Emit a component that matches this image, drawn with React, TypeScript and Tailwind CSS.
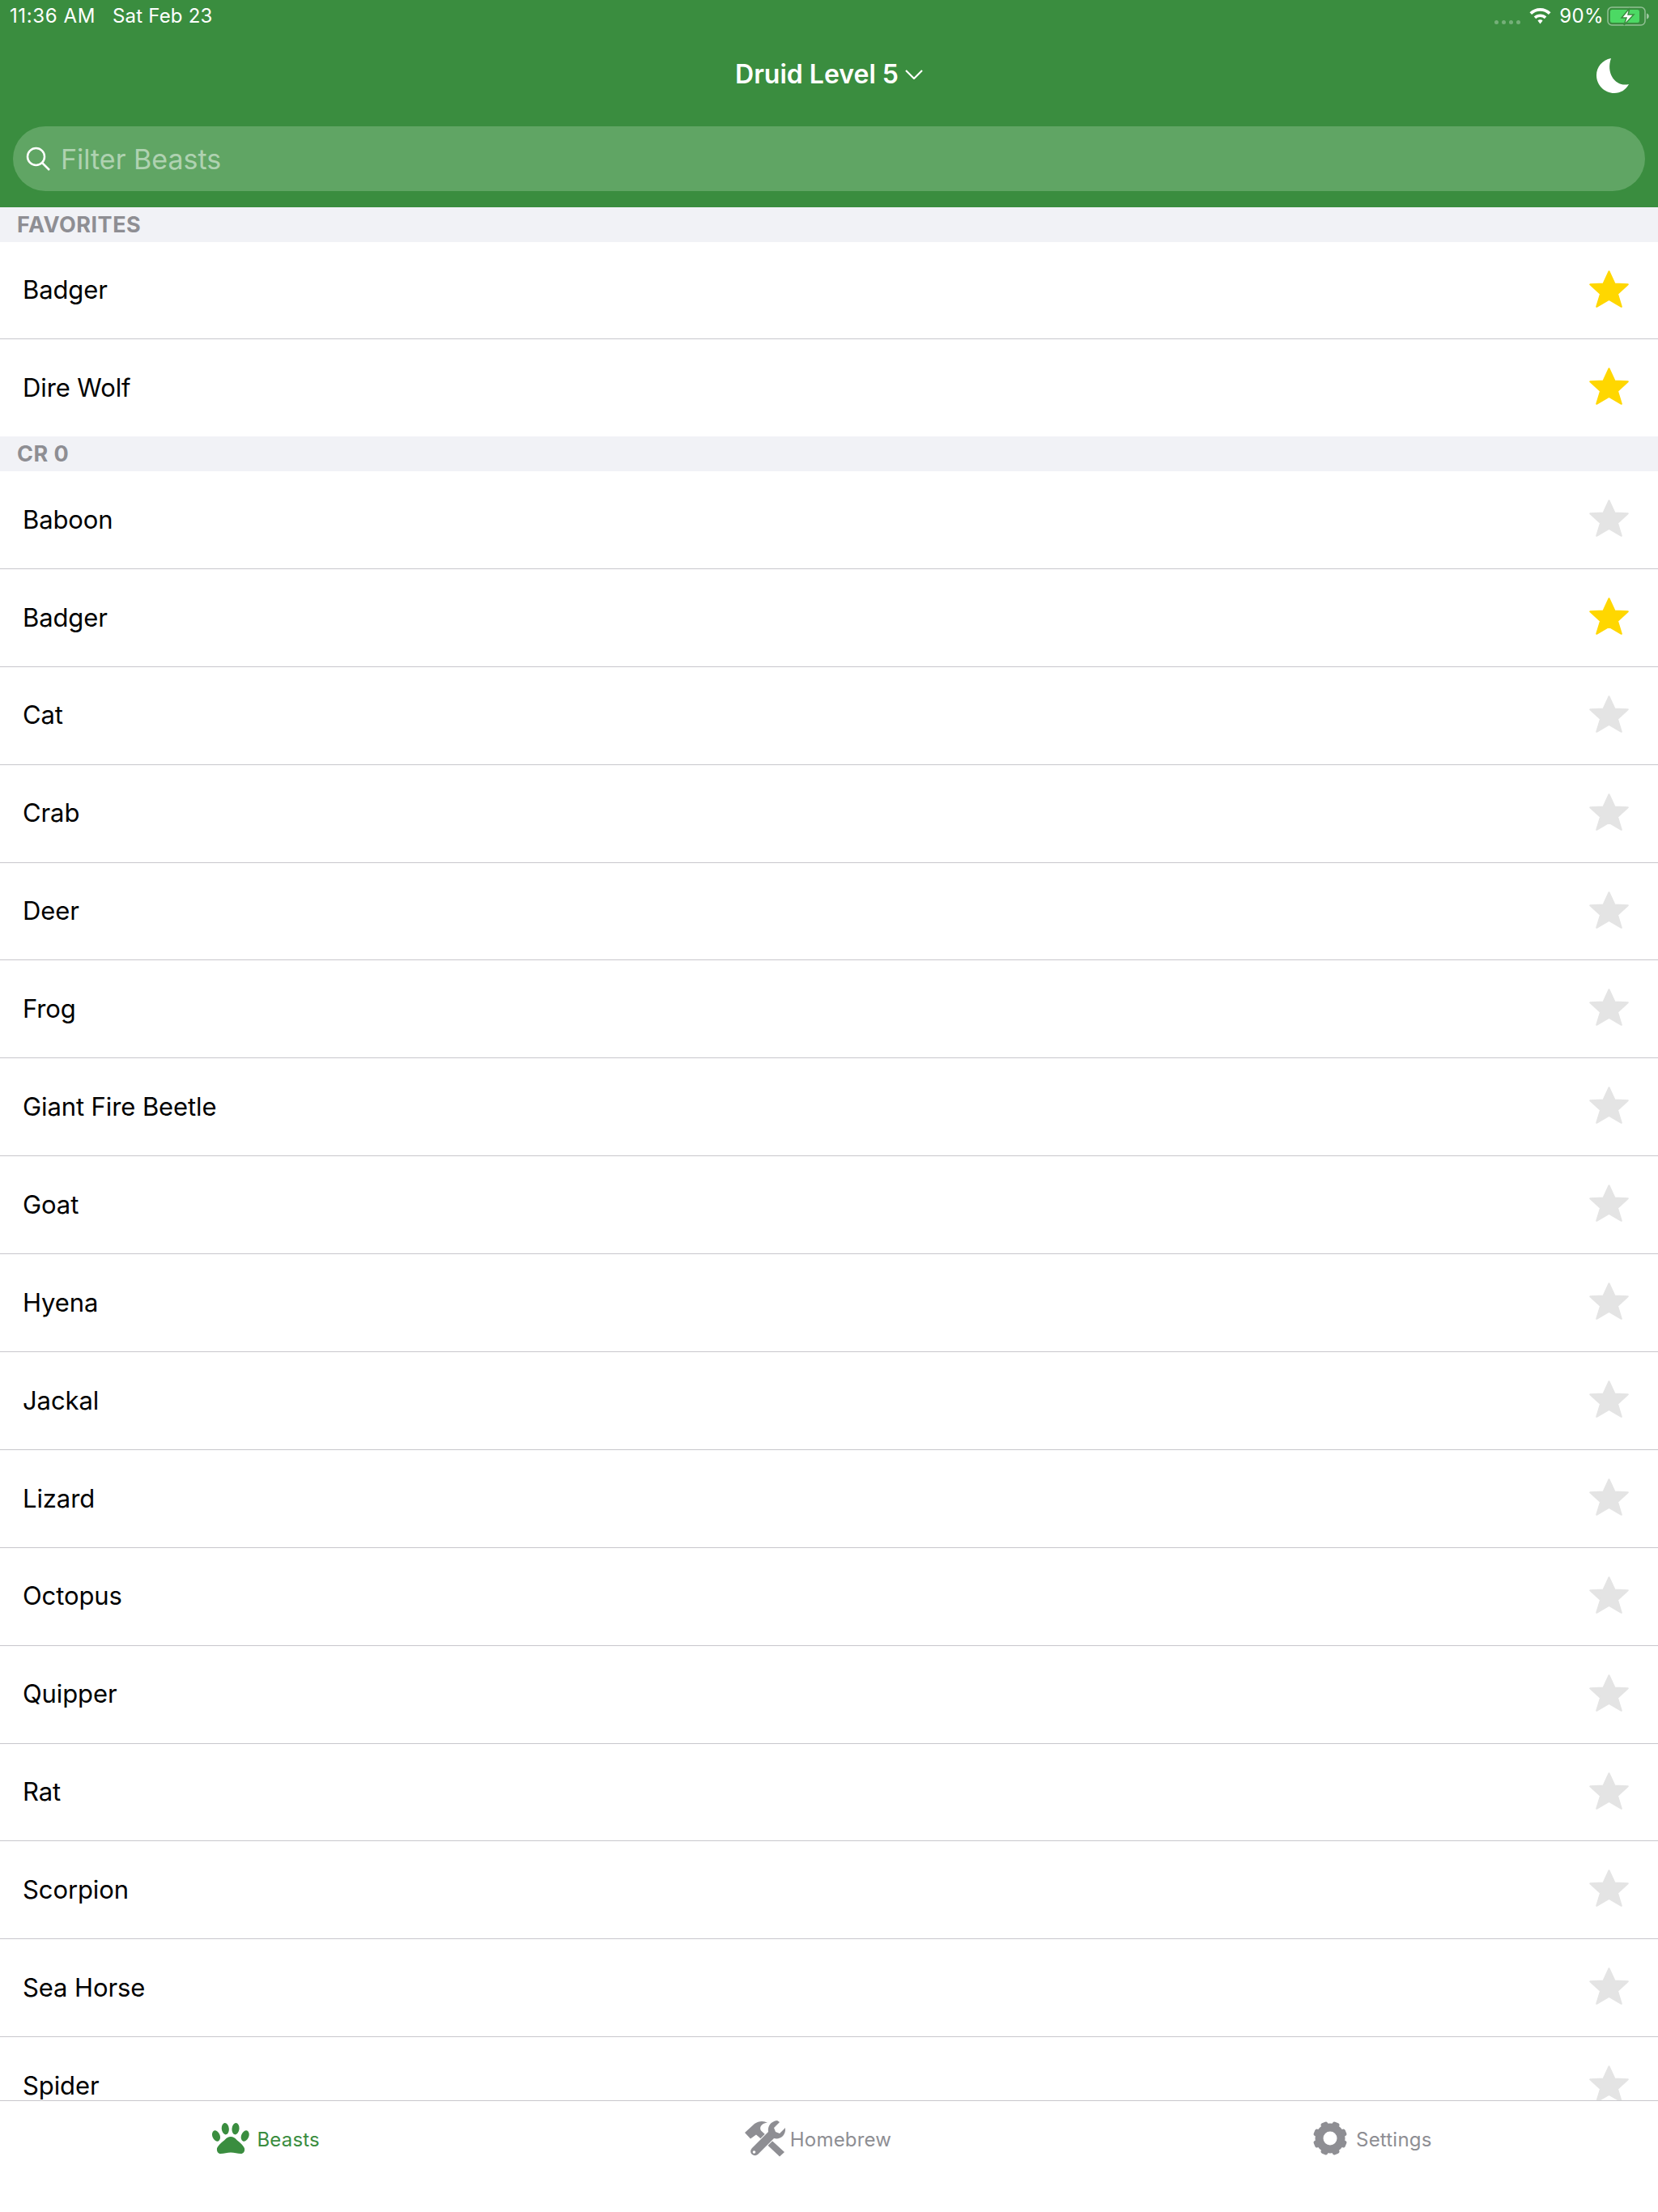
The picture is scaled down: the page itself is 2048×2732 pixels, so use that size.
const favorites = ["Badger", "Dire Wolf"]

const crZero = [
  "Baboon",
  "Badger",
  "Cat",
  "Crab",
  "Deer",
  "Frog",
  "Giant Fire Beetle",
  "Goat",
  "Hyena",
  "Jackal",
  "Lizard",
  "Octopus",
  "Quipper",
  "Rat",
  "Scorpion",
  "Sea Horse",
  "Spider",
]

const gearTeeth = [22.5, 67.5, 112.5, 157.5, 202.5, 247.5, 292.5, 337.5]

function StatusBar() {
  return (
    <div className="flex h-10 items-center justify-between pl-3 pr-[11px] text-[24px] text-white">
      <div className="flex gap-[21px]">
        <span className="tracking-[0.6px]">11:36 AM</span>
        <span className="tracking-[0.2px]">Sat Feb 23</span>
      </div>
      <div className="flex items-center">
        <div className="mr-[11px] mt-[14px] flex gap-[4px]">
          <span className="h-[5px] w-[5px] rounded-full bg-white/30" />
          <span className="h-[5px] w-[5px] rounded-full bg-white/30" />
          <span className="h-[5px] w-[5px] rounded-full bg-white/30" />
          <span className="h-[5px] w-[5px] rounded-full bg-white/30" />
        </div>
        <svg width="27" height="20" viewBox="0 0 27 20" fill="#fff" className="mr-[10px]">
          <path d="M13.5 0C8.4 0 3.9 2 .5 5.2l2.6 2.7C5.8 5.4 9.5 3.8 13.5 3.8s7.7 1.6 10.4 4.1l2.6-2.7C23.1 2 18.6 0 13.5 0z" />
          <path d="M13.5 7.4c-3 0-5.7 1.2-7.8 3.1l2.6 2.7c1.4-1.3 3.2-2.1 5.2-2.1s3.8.8 5.2 2.1l2.6-2.7c-2.1-1.9-4.8-3.1-7.8-3.1z" />
          <path d="M13.5 14.3c-1.2 0-2.3.5-3.1 1.2l3.1 3.9 3.1-3.9c-.8-.7-1.9-1.2-3.1-1.2z" />
        </svg>
        <span className="mr-[4px] tracking-[0.4px]">90%</span>
        <svg width="52" height="24" viewBox="0 0 52 24">
          <rect x="1" y="1" width="46" height="22" rx="5" fill="none" stroke="#fff" strokeOpacity="0.45" strokeWidth="1.5" />
          <rect x="4" y="4" width="36" height="16" rx="2.5" fill="#4cd964" />
          <path d="M49 8.5c1.7.4 2.8 1.8 2.8 3.5s-1.1 3.1-2.8 3.5z" fill="#fff" fillOpacity="0.5" />
          <path d="M28 2 18 14h6l-3 9 12-13h-7z" fill="#fff" stroke="#3a8d3f" strokeWidth="1.5" />
        </svg>
      </div>
    </div>
  )
}

function Header() {
  return (
    <header className="h-64 shrink-0 bg-[#3a8d3f]">
      <StatusBar />
      <div className="relative mb-3 flex h-[104px] items-center justify-center">
        <span className="text-[32px] font-semibold text-white">Druid Level 5</span>
        <svg width="22" height="12" viewBox="0 0 22 12" fill="none" stroke="#fff" strokeWidth="2.2" className="ml-2">
          <path d="M1 1l10 10L21 1" />
        </svg>
        {/* crescent, not quite the ionicons moon */}
        <svg width="40" height="43" viewBox="0 0 40 43" fill="#fff" className="absolute right-[36px] top-[32px]">
          <path d="M18 0C7 2 0 11 0 21c0 12 10 22 22 22 8 0 14-4 18-11C25 36 11 20 18 0z" />
        </svg>
      </div>
      <div className="mx-4 flex h-20 items-center rounded-[40px] bg-[#60a564] pl-4">
        <svg width="30" height="30" viewBox="0 0 30 30" fill="none" stroke="#fff" strokeWidth="2.5">
          <circle cx="12.5" cy="12.5" r="10.5" />
          <path d="M20 20l9 9" />
        </svg>
        <span className="ml-[13px] text-[34px] text-white/50">Filter Beasts</span>
      </div>
    </header>
  )
}

function SectionHeader({ title }: { title: string }) {
  return (
    <div className="flex h-[43px] items-center bg-[#f1f2f6] pl-[21px] pt-[1px] text-[27px] font-bold tracking-[0.5px] text-[#8e8e93]">
      {title}
    </div>
  )
}

function BeastRow({ name, starred, compact, last }: { name: string; starred?: boolean; compact?: boolean; last?: boolean }) {
  return (
    <div
      className={`flex shrink-0 items-center justify-between pl-7 pr-9 ${compact ? "h-[120px]" : "h-[120.9px]"} ${
        last ? "" : "border-b border-[#c8c7cc]"
      }`}
    >
      <span className="text-[31px] tracking-[-0.1px] text-black">{name}</span>
      <svg
        width="49"
        height="46"
        viewBox="0 0 49 46"
        fill="currentColor"
        stroke="currentColor"
        strokeWidth="2"
        strokeLinejoin="round"
        className={`mb-1 ${starred ? "text-[#ffd700]" : "text-[#e4e4e4]"}`}
      >
        <path d="M24.5 1.2 31.5 16.5 47.8 17.3 35 29 39.8 44.8 24.5 35.8 9.2 44.8 14 29 1.2 17.3 17.5 16.5z" />
      </svg>
    </div>
  )
}

function PawIcon() {
  return (
    <svg width="46" height="38" viewBox="0 0 46 38" fill="currentColor" className="mb-1">
      <ellipse cx="5" cy="16" rx="4.6" ry="7" transform="rotate(-22 5 16)" />
      <ellipse cx="16.3" cy="7.2" rx="4.5" ry="7.2" transform="rotate(-6 16.3 7.2)" />
      <ellipse cx="29" cy="7.2" rx="4.5" ry="7.2" transform="rotate(6 29 7.2)" />
      <ellipse cx="40.7" cy="16" rx="4.6" ry="7" transform="rotate(22 40.7 16)" />
      <path d="M23 17c3 0 5 1.5 7 3.5 2 2 9 7 10 11 .7 4-1.5 6.5-4.5 6.5-4 0-8-1.5-12.5-1.5S15 38 10.5 38c-3 0-5-2.5-4.5-6.5 1-4 8-9 10-11 2-2 4-3.5 7-3.5z" />
    </svg>
  )
}

function ToolsIcon() {
  return (
    <svg width="52" height="48" viewBox="6 5 52 48" fill="currentColor" className="mb-1">
      {/* hammer */}
      <path d="M7 22 19 11c3-2 6-3 9-3 3 0 5 .8 7 2-3 0-5 .5-7 2.5-2 2-2.5 4.5-1 7L56 46l-6 5.5L24 27l-3-2.5-7 5z" />
      {/* wrench, white edge so it reads on top of the hammer */}
      <path
        d="M47 7c-8 1-12 7-11 14L16 41c-3 3-2 7 1 8.5 3 1.5 5 .5 7-1.5l19-19c7 2 15-3 14-13l-7 7-5-2-2-5 7-7z"
        stroke="#fff"
        strokeWidth="2"
        paintOrder="stroke"
      />
      <circle cx="18.5" cy="46" r="1.8" fill="#fff" />
    </svg>
  )
}

function GearIcon() {
  return (
    <svg width="42" height="42" viewBox="-21 -21 42 42" className="mb-1">
      <circle r="13.5" fill="none" stroke="currentColor" strokeWidth="10" />
      {gearTeeth.map((deg) => (
        <rect key={deg} x="-4.5" y="-21" width="9" height="6" rx="2.5" fill="currentColor" transform={`rotate(${deg})`} />
      ))}
    </svg>
  )
}

function TabBar() {
  return (
    <nav className="flex h-[138px] shrink-0 border-t border-[#c8c7cc] bg-white text-[24px] tracking-[0.2px]">
      <div className="flex flex-1 justify-center pr-6 pt-[23px] text-[#3a8d3f]">
        <div className="flex h-[50px] items-center">
          <PawIcon />
          <span className="ml-[9px]">Beasts</span>
        </div>
      </div>
      <div className="flex flex-1 justify-center pr-[28px] pt-[23px] text-[#8e8e93]">
        <div className="flex h-[50px] items-center">
          <ToolsIcon />
          <span className="ml-[5px]">Homebrew</span>
        </div>
      </div>
      <div className="flex flex-1 justify-center pr-6 pt-[23px] text-[#8e8e93]">
        <div className="flex h-[50px] items-center">
          <GearIcon />
          <span className="ml-[11px]">Settings</span>
        </div>
      </div>
    </nav>
  )
}

export default function App() {
  return (
    <div className="flex h-[2732px] w-[2048px] flex-col overflow-hidden bg-white font-['Inter',sans-serif]">
      <Header />
      <main className="min-h-0 flex-1 overflow-hidden">
        <SectionHeader title="FAVORITES" />
        {favorites.map((name, i) => (
          <BeastRow key={name} name={name} starred compact last={i === favorites.length - 1} />
        ))}
        <SectionHeader title="CR 0" />
        {crZero.map((name) => (
          <BeastRow key={name} name={name} starred={name === "Badger"} />
        ))}
      </main>
      <TabBar />
    </div>
  )
}
